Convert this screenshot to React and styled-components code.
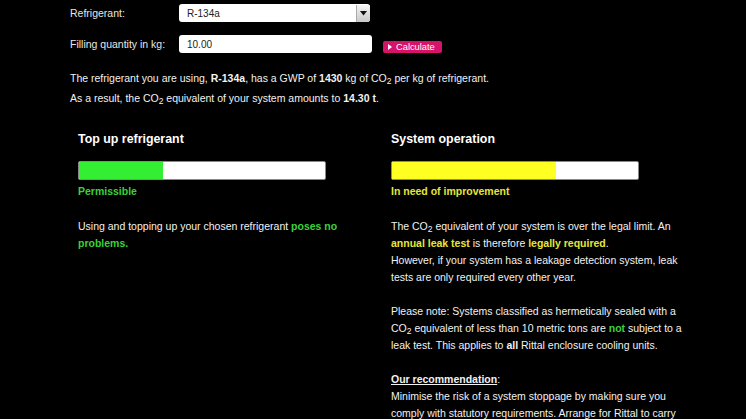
import React from "react";
import styled, { createGlobalStyle } from "styled-components";

const Global = createGlobalStyle`
  html, body { margin: 0; padding: 0; background: #000; }
  body { font-family: "Liberation Sans", Arial, sans-serif; color: #f2f2f2; font-size: 10.5px; }
`;

const Page = styled.div`
  width: 746px;
  height: 419px;
  overflow: hidden;
  padding: 4px 0 0 70px;
  box-sizing: border-box;
`;

const Form = styled.div`
  display: grid;
  grid-template-columns: 109px auto;
  row-gap: 13px;
  align-items: center;
`;

const Label = styled.div`
  color: #e6e6e6;
  font-size: 10.5px;
`;

const FieldRow = styled.div`
  display: flex;
  align-items: center;
  gap: 11px;
`;

const Select = styled.div`
  width: 191px;
  height: 18px;
  box-sizing: border-box;
  background: #fff;
  border-radius: 3px;
  display: flex;
  align-items: center;
  justify-content: space-between;
  padding-left: 8px;
  color: #222;
  font-size: 10px;
  overflow: hidden;
`;

const Arrow = styled.div`
  width: 14px;
  height: 17px;
  box-sizing: border-box;
  border-left: 1px solid #aaa;
  background: linear-gradient(#f4f4f4, #c8c8c8);
  display: flex;
  align-items: center;
  justify-content: center;
`;

const Input = styled.div`
  width: 193px;
  height: 18px;
  box-sizing: border-box;
  background: #fff;
  border-radius: 3px;
  padding-left: 8px;
  display: flex;
  align-items: center;
  color: #222;
  font-size: 10px;
`;

const Button = styled.div`
  margin-top: 5px;
  width: 59px;
  height: 12px;
  box-sizing: border-box;
  background: #d6136a;
  border-radius: 2px;
  display: flex;
  align-items: center;
  gap: 4px;
  padding-left: 5px;
  color: #fff;
  font-size: 9.3px;
  line-height: 12px;
`;

const Intro = styled.p`
  margin: 15px 0 0;
  line-height: 20px;
  font-size: 10.5px;
  color: #f2f2f2;
`;

const Columns = styled.div`
  display: grid;
  grid-template-columns: 296px 296px;
  column-gap: 17px;
  padding-left: 8px;
  margin-top: 23px;
`;

const Column = styled.div`
  display: flex;
  flex-direction: column;
`;

const Heading = styled.h3`
  margin: 0;
  font-size: 12.4px;
  line-height: 16px;
  font-weight: bold;
  color: #fff;
`;

const Bar = styled.div`
  margin-top: 14px;
  width: 248px;
  height: 19px;
  box-sizing: border-box;
  background: #fff;
  border: 1px solid #888;
  border-radius: 2px;
  overflow: hidden;
`;

const Fill = styled.div`
  height: 100%;
  background: ${(p) => p.$color};
`;

const Status = styled.div`
  margin-top: 3px;
  font-weight: bold;
  line-height: 17px;
  color: ${(p) => p.$color};
`;

const Body = styled.div`
  margin-top: 18px;
  line-height: 17px;
  color: #f2f2f2;
`;

const Para = styled.p`
  margin: 0 0 17px;
`;

const Hl = styled.b`
  color: ${(p) => p.$color};
`;

const U = styled.b`
  text-decoration: underline;
`;

const Sub = styled.sub`
  font-size: 8.5px;
  vertical-align: -2px;
  line-height: 0;
`;

const GREEN = "#3ad23a";
const YELLOW = "#e6e63a";

export default function App() {
  return (
    <Page>
      <Global />
      <Form>
        <Label>Refrigerant:</Label>
        <Select>
          R-134a
          <Arrow>
            <svg width="7" height="5" viewBox="0 0 7 5">
              <path d="M0 0 L7 0 L3.5 4.5 Z" fill="#111" />
            </svg>
          </Arrow>
        </Select>
        <Label>Filling quantity in kg:</Label>
        <FieldRow>
          <Input>10.00</Input>
          <Button>
            <svg width="4" height="6" viewBox="0 0 4 6">
              <path d="M0 0 L4 3 L0 6 Z" fill="#fff" />
            </svg>
            Calculate
          </Button>
        </FieldRow>
      </Form>
      <Intro>
        The refrigerant you are using, <b>R-134a</b>, has a GWP of <b>1430</b> kg of CO<Sub>2</Sub> per kg of refrigerant.
        <br />
        As a result, the CO<Sub>2</Sub> equivalent of your system amounts to <b>14.30 t</b>.
      </Intro>
      <Columns>
        <Column>
          <Heading>Top up refrigerant</Heading>
          <Bar>
            <Fill $color="#33ee33" style={{ width: "34%" }} />
          </Bar>
          <Status $color={GREEN}>Permissible</Status>
          <Body>
            Using and topping up your chosen refrigerant <Hl $color={GREEN}>poses no problems.</Hl>
          </Body>
        </Column>
        <Column>
          <Heading>System operation</Heading>
          <Bar>
            <Fill $color="#ffff22" style={{ width: "66.5%" }} />
          </Bar>
          <Status $color={YELLOW}>In need of improvement</Status>
          <Body>
            <Para>
              The CO<Sub>2</Sub> equivalent of your system is over the legal limit. An{" "}
              <Hl $color={YELLOW}>annual leak test</Hl> is therefore <Hl $color={YELLOW}>legally required</Hl>.
              <br />
              However, if your system has a leakage detection system, leak tests are only required every other year.
            </Para>
            <Para>
              Please note: Systems classified as hermetically sealed with a CO<Sub>2</Sub> equivalent of less than 10
              metric tons are <Hl $color={GREEN}>not</Hl> subject to a leak test. This applies to <b>all</b> Rittal
              enclosure cooling units.
            </Para>
            <Para>
              <U>Our recommendation</U>:
              <br />
              Minimise the risk of a system stoppage by making sure you comply with statutory requirements. Arrange for
              Rittal to carry out your leak tests.
            </Para>
          </Body>
        </Column>
      </Columns>
    </Page>
  );
}
